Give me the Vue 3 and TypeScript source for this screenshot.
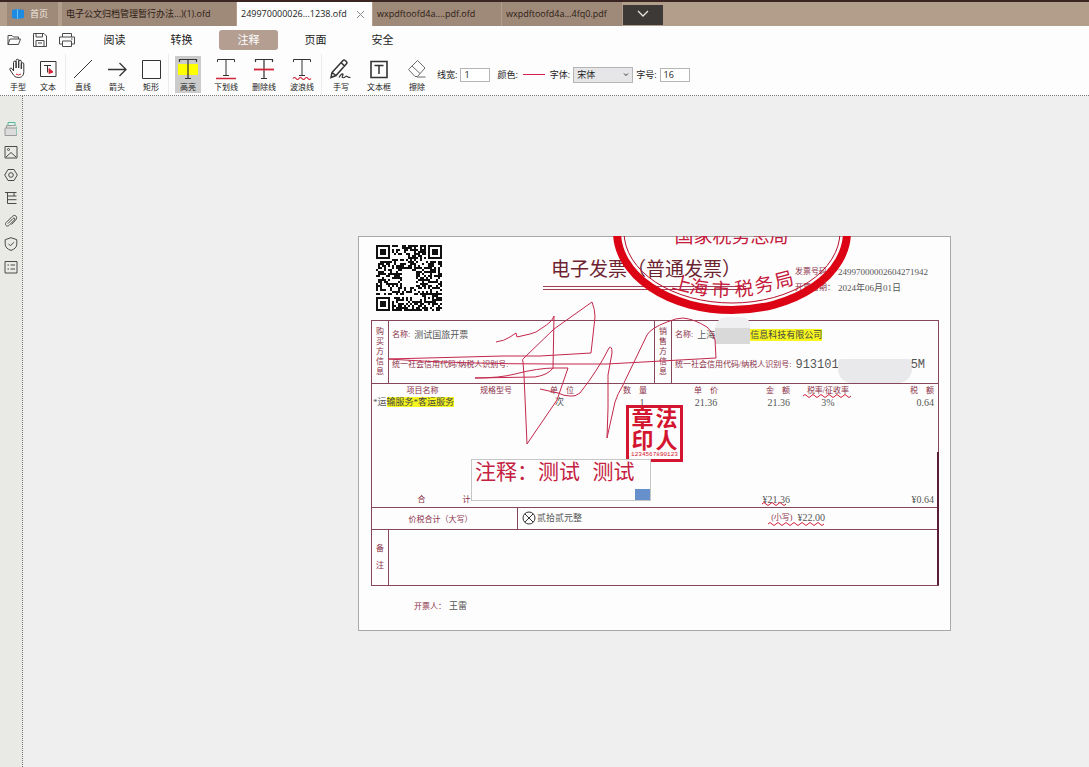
<script setup lang="ts">
import { ref } from 'vue'

interface Tool {
  id: string
  label: string
}

const menus = ['阅读', '转换', '注释', '页面', '安全']
const activeMenu = ref('注释')

const toolGroups: { name: string; tools: Tool[] }[] = [
  { name: 'select', tools: [{ id: 'hand', label: '手型' }, { id: 'text', label: '文本' }] },
  {
    name: 'shape',
    tools: [{ id: 'line', label: '直线' }, { id: 'arrow', label: '箭头' }, { id: 'rect', label: '矩形' }],
  },
  {
    name: 'mark',
    tools: [
      { id: 'highlight', label: '高亮' },
      { id: 'underline', label: '下划线' },
      { id: 'strike', label: '删除线' },
      { id: 'wavy', label: '波浪线' },
    ],
  },
  {
    name: 'mark',
    tools: [{ id: 'pen', label: '手写' }, { id: 'textbox', label: '文本框' }, { id: 'erase', label: '擦除' }],
  },
]
const activeTool = ref('highlight')

const lineWidth = ref('1')
const fontSize = ref('16')
const fontName = ref('宋体')
const note = ref('注释：测试 测试')

const panels = ['缩略图', '图片', '设置', '大纲', '附件', '签章', '列表']

function finder(x: number, y: number, size: number): boolean | null {
  const corners = [[0, 0], [size - 7, 0], [0, size - 7]]
  for (const [cx, cy] of corners) {
    const dx = x - cx
    const dy = y - cy
    if (dx >= -1 && dx <= 7 && dy >= -1 && dy <= 7) {
      const d = Math.max(Math.abs(dx - 3), Math.abs(dy - 3))
      return d === 3 || d <= 1
    }
  }
  const a = Math.max(Math.abs(x - 26), Math.abs(y - 26))
  if (a <= 2) return a !== 1
  return null
}

function qrPath(size: number): string {
  let seed = 20240601
  let d = ''
  for (let y = 0; y < size; y++) {
    for (let x = 0; x < size; x++) {
      seed = (seed * 48271) % 2147483647
      const fixed = finder(x, y, size)
      const hole = x > 12 && x < 20 && y > 12 && y < 21
      const on = fixed === null ? !hole && (seed >> 8) % 100 < 52 : fixed
      if (on) d += `M${x} ${y}h1v1h-1z`
    }
  }
  return d
}
const qr = qrPath(33)

function wave(x: number, y: number, count: number): string {
  return `M${x} ${y}` + 'q2 -3 4 0t4 0'.repeat(count)
}
const waves = [wave(445, 160, 6), wave(404, 268, 3), wave(410, 288, 7)]

const topSeal = [
  { c: '国', x: 326 }, { c: '家', x: 345 }, { c: '税', x: 364 },
  { c: '务', x: 383 }, { c: '总', x: 402 }, { c: '局', x: 421 },
]
const bottomSeal = [
  { c: '上', x: 324, y: 48, r: 14 }, { c: '海', x: 341, y: 52, r: 8 }, { c: '市', x: 363, y: 54, r: 2 },
  { c: '税', x: 386, y: 53, r: -5 }, { c: '务', x: 406, y: 49, r: -10 }, { c: '局', x: 426, y: 44, r: -15 },
]
const nameSeal = ['章', '法', '印', '人']
</script>

<template>
  <div class="app">
    <nav class="tabs" aria-label="文档">
      <button class="tab home">
        <svg width="14" height="12" viewBox="0 0 14 12"><path d="M1 2l5-1v10l-5-1zM7 1l6 1v8l-6 1z" fill="#1c8be0" /><path d="M6.500 1v10" stroke="#6fc0f5" /></svg>
        <span>首页</span>
      </button>
      <button class="tab long">电子公文归档管理暂行办法...)(1).ofd</button>
      <button class="tab current">
        <span>249970000026...1238.ofd</span>
        <svg width="9" height="9" viewBox="0 0 9 9"><path d="M1 1l7 7M8 1l-7 7" stroke="#8a8a8a" /></svg>
      </button>
      <button class="tab third">wxpdftoofd4a....pdf.ofd</button>
      <button class="tab fourth">wxpdftoofd4a...4fq0.pdf</button>
      <button class="more" aria-label="更多标签">
        <svg width="12" height="8" viewBox="0 0 12 8"><path d="M1 1l5 5 5-5" fill="none" stroke="#e8e4e0" stroke-width="1.300" /></svg>
      </button>
    </nav>

    <header class="ribbon">
      <div class="menu-row">
        <div class="quick">
          <button aria-label="打开">
            <svg width="16" height="16" viewBox="0 0 16 16"><path d="M2 12.500V3.500h4l1.500 1.500h5v2M2 12.500l2-5.500h10.500l-2 5.500z" /></svg>
          </button>
          <button aria-label="保存">
            <svg width="16" height="16" viewBox="0 0 16 16"><path d="M1.500 1.500h10.500l2.500 2.500v10.500h-13zM4 1.500v3.500h6.500V1.500M4 14.500V8.500h8v6M6 11h4" /></svg>
          </button>
          <button aria-label="打印">
            <svg width="18" height="16" viewBox="0 0 18 16"><path d="M4.500 5V1.500h9V5M4.500 12H1.500V5h15v7h-3M4.500 9h9v5.500h-9zM13 7h1.500" /></svg>
          </button>
        </div>
        <button
          v-for="m in menus"
          :key="m"
          class="menu"
          :class="{ on: m === activeMenu }"
          @click="activeMenu = m"
        >{{ m }}</button>
      </div>

      <div class="tool-row">
        <div v-for="(g, gi) in toolGroups" :key="gi" class="group" :class="g.name">
          <button
            v-for="t in g.tools"
            :key="t.id"
            class="tool"
            @click="activeTool = t.id"
          >
            <span class="tool-face" :class="{ on: t.id === activeTool }">
              <svg width="24" height="24" viewBox="0 0 24 24">
                <g v-if="t.id === 'hand'">
                  <path d="M7.500 14V5.500a1.300 1.300 0 0 1 2.600 0V11M10.100 11V3.500a1.300 1.300 0 0 1 2.600 0V11M12.700 11V4.500a1.300 1.300 0 0 1 2.600 0V12M15.300 12V7a1.200 1.200 0 0 1 2.500 0v7.500c0 4-2 6-5.300 6-3 0-4.500-1.500-5.700-3.500L4 12.800c-.8-1.600 1-2.300 2-1.200l1.500 2.200" />
                  <path d="M10 17q2.500 2 5 0" stroke="#d22638" />
                </g>
                <g v-else-if="t.id === 'text'">
                  <path d="M4.500 4.500h15.500v15H4.500z" />
                  <path d="M8 8.500h7M11.500 8.500v7" />
                  <path d="M13 11.500l4 3.500-4 1.500z" fill="#d22638" stroke="#d22638" />
                </g>
                <path v-else-if="t.id === 'line'" d="M3 21L21 3" />
                <path v-else-if="t.id === 'arrow'" d="M3 12.500h18M14.500 6L21 12.500l-6.500 6.500" stroke-width="1.300" />
                <path v-else-if="t.id === 'rect'" d="M3.500 3.500h18v18h-18z" />
                <g v-else-if="t.id === 'highlight'">
                  <path d="M2 7h20v11H2z" fill="#ffff00" stroke="none" />
                  <path d="M3.500 5V2.500h17V5M12 2.500v19M9 21.500h6" stroke-width="1.200" />
                </g>
                <g v-else-if="t.id === 'underline'">
                  <path d="M3.500 5V2.500h17V5M12 2.500v15.500M9 18.500h6" />
                  <path d="M2 21.500h20" stroke="#d22638" stroke-width="1.500" />
                </g>
                <g v-else-if="t.id === 'strike'">
                  <path d="M3.500 5V2.500h17V5M12 2.500v19M9 21.500h6" stroke-width="1.200" />
                  <path d="M2 12.500h20" stroke="#d22638" stroke-width="1.800" />
                </g>
                <g v-else-if="t.id === 'wavy'">
                  <path d="M3.500 5V2.500h17V5M12 2.500v15.500M9 18.500h6" />
                  <path d="M3 21.500q1.500-2 3 0t3 0 3 0 3 0 3 0 3 0" stroke="#d22638" stroke-width="1.200" />
                </g>
                <g v-else-if="t.id === 'pen'">
                  <path d="M3 15.500L14 3.500q1-1 2.200 0l1.300 1.200q1 1 0 2L7 18.500l-5 2zM12 5.500l3.500 3.500M3 15.500l4 3" stroke-width="1.500" />
                  <path d="M10 20.500c3-5 5-4 3.500-1.500s2 2 3 .500 1.500 1 5 1" stroke-width="1.200" />
                </g>
                <g v-else-if="t.id === 'textbox'">
                  <path d="M4 4.500h16v16H4z" stroke-width="1.600" />
                  <path d="M7.500 8.500h9M12 8.500v8.500" stroke-width="1.500" />
                </g>
                <g v-else>
                  <path d="M3.500 12.500L12.500 3.500l7.500 7.500-7.500 8.500H10zM7 9l8 7.500M12 20h8.500" stroke="#6c6c6c" />
                </g>
              </svg>
              <span>{{ t.label }}</span>
            </span>
          </button>
        </div>

        <div class="options">
          <label for="line-width">线宽:</label>
          <input id="line-width" v-model="lineWidth" type="text" />
          <span class="gap"></span>
          <span>颜色:</span>
          <button class="color" aria-label="颜色"><i></i></button>
          <label for="font-name">字体:</label>
          <span class="select">
            <select id="font-name" v-model="fontName">
              <option>宋体</option>
              <option>楷体</option>
            </select>
            <svg width="6" height="4" viewBox="0 0 6 4"><path d="M1 .500l2 2 2-2" fill="none" stroke="#333" /></svg>
          </span>
          <label for="font-size">字号:</label>
          <input id="font-size" v-model="fontSize" type="text" />
        </div>
      </div>
    </header>

    <div class="body">
      <aside class="side">
        <button v-for="(p, i) in panels" :key="p" :aria-label="p">
          <svg width="14" height="14" viewBox="0 0 14 14">
            <g v-if="i === 0">
              <path d="M4 4V.500h7V4" fill="#dff3ea" stroke="#55b79a" />
              <path d="M2.500 6V3.500h9M1 6h11.500v7.500H1z" fill="#dcdcdc" stroke="#9a9a9a" />
              <path d="M12.500 4.500v8" stroke="#8fc9b6" />
            </g>
            <g v-else-if="i === 1">
              <path d="M1 1.500h12v11.500H1zM2 12l5-4.500 5 4.500" />
              <circle cx="4.500" cy="4.500" r="1" />
            </g>
            <g v-else-if="i === 2">
              <path d="M4 1.500h6L13.300 7 10 12.500H4L.7 7z" />
              <circle cx="7" cy="7" r="2.300" />
            </g>
            <path v-else-if="i === 3" d="M1 1.500h11.500M3.500 1.500v11h9M3.500 5h9M3.500 8.700h9M10 1.500v3.500" />
            <path v-else-if="i === 4" d="M4 9.500l5-5c1.200-1.200 2.600.2 1.500 1.400l-5.500 5.500c-2 2-4.800-.8-2.800-2.900l6-6c2.800-2.800 6 .6 3.600 3.300L7.500 10.500" />
            <path v-else-if="i === 5" d="M7 .700l5.800 2v4.500c0 3-2.300 5-5.800 6.200C3.500 12.200 1.200 10.200 1.200 7.200V2.700zM4.500 6.800l2 2 3.300-3.500" />
            <path v-else d="M1 1.500h12v11.500H1zM3.500 5h1.500M6.500 5h4.500M3.500 9h1.500M6.500 9h4.500" />
          </svg>
        </button>
      </aside>

      <main class="canvas">
        <article class="paper">
          <div class="head">
            <svg class="qr" width="66" height="66" viewBox="0 0 33 33" shape-rendering="crispEdges"><path :d="qr" fill="#111" /></svg>
            <h1>电子发票（普通发票）</h1>
            <dl class="meta">
              <dt>发票号码：</dt><dd>24997000002604271942</dd>
              <dt>开票日期：</dt><dd>2024年06月01日</dd>
            </dl>
          </div>

          <div class="sheet">
            <section class="parties">
              <div class="vertical">购买方信息</div>
              <div class="party">
                <p><b>名称:</b> 测试国旅开票</p>
                <p><b>统一社会信用代码/纳税人识别号:</b></p>
              </div>
              <div class="vertical">销售方信息</div>
              <div class="party">
                <p><b>名称:</b><span class="row">上海<span class="mask name"></span><mark>信息科技有限公司</mark></span></p>
                <p><b>统一社会信用代码/纳税人识别号:</b><span class="row"><span class="code">913101</span><span class="mask id"></span><span class="code">5M</span></span></p>
              </div>
            </section>

            <table class="items">
              <colgroup>
                <col class="c1" /><col class="c2" /><col class="c3" /><col class="c4" /><col class="c5" /><col class="c6" /><col class="c7" /><col />
              </colgroup>
              <thead>
                <tr>
                  <th>项目名称</th><th>规格型号</th><th>单　位</th><th>数　量</th><th>单　价</th><th class="amount">金　额</th><th>税率/征收率</th><th class="tax">税　额</th>
                </tr>
              </thead>
              <tbody>
                <tr>
                  <td class="item">*运<mark>输服务*客运服务</mark></td><td></td><td class="unit">次</td><td class="qty">1</td><td>21.36</td><td class="amount">21.36</td><td>3%</td><td class="tax">0.64</td>
                </tr>
                <tr class="blank"><td colspan="8"></td></tr>
              </tbody>
              <tfoot>
                <tr>
                  <th class="sum"><span>合</span><span>计</span></th><td colspan="4"></td><td class="amount">¥21.36</td><td></td><td class="tax">¥0.64</td>
                </tr>
              </tfoot>
            </table>

            <section class="total">
              <div class="total-label">价税合计（大写）</div>
              <div class="total-value">
                <svg width="14" height="14" viewBox="0 0 14 14"><circle cx="7" cy="7" r="6" /><path d="M2.800 2.800l8.400 8.400M11.200 2.800l-8.400 8.400" /></svg>
                <span>贰拾贰元整</span>
                <span class="small"><b>(小写)</b><em>¥22.00</em></span>
              </div>
            </section>

            <section class="remark">
              <div class="vertical wide">备注</div>
              <div></div>
            </section>
          </div>

          <p class="issuer"><b>开票人：</b>王雷</p>

          <svg class="ink" viewBox="0 0 593 395">
            <g fill="none">
              <ellipse cx="374" cy="-4" rx="115" ry="78" stroke="#dc0414" stroke-width="8" />
              <ellipse cx="374" cy="-4" rx="108" ry="71" stroke="#b80f2a" stroke-width="1" />
            </g>
            <g class="seal-text">
              <text v-for="s in topSeal" :key="'t' + s.x" :x="s.x" y="7">{{ s.c }}</text>
              <text v-for="s in bottomSeal" :key="'b' + s.x" :x="s.x" :y="s.y" dominant-baseline="central" :transform="`rotate(${s.r} ${s.x} ${s.y})`">{{ s.c }}</text>
            </g>
            <g class="scribble">
              <path d="M138 106Q146 105 152 101L158 97L159 101L172 98Q178 97 184 92Q194 86 196 80L195 132Q190 139 177 141L117 142Q142 142 157 138Q180 132 197 132L210 132L199 164L169 208L166 139L165 126Q163 124 167 121L196 93L234 66Q237 73 237 81L233 117L182 120L145 120L30 123Q100 128 197 128L249 128L358 122L357 104Q356 97 349 91Q336 83 325 82Q318 82 309 86Q293 92 289 99L264 151Q260 157 257 166L249 202L250 172L250 139L254 117Q254 109 251 112Q240 134 222 157Q217 161 212 160Q206 160 200 157L182 153" />
            </g>
            <path v-for="w in waves" :key="w" :d="w" fill="none" stroke="#d0203c" />
            <path d="M580 216v133" stroke="#5b1c35" stroke-width="2" />
          </svg>

          <div class="seal">
            <div class="seal-name"><span v-for="c in nameSeal" :key="c">{{ c }}</span></div>
            <div class="seal-code">1234567890123</div>
          </div>

          <div class="note">
            <textarea v-model="note" aria-label="注释" spellcheck="false"></textarea>
            <i></i>
          </div>
        </article>
      </main>
    </div>
  </div>
</template>

<style>
body {
  margin: 0;
}
</style>

<style scoped>
.app {
  display: flex;
  flex-direction: column;
  min-height: 100vh;
  background: #efefef;
  color: #222;
  font: 9px/12px "Open Sans", "Noto Sans CJK SC", sans-serif;
}
.app *,
.app *::before {
  box-sizing: border-box;
}
button {
  padding: 0;
  border: 0;
  background: none;
  color: inherit;
  font: inherit;
}
p,
h1,
dl,
dd {
  margin: 0;
}

.tabs {
  display: flex;
  height: 26px;
  padding: 0 0 0 7px;
  gap: 1px;
  border-top: 2px solid #3b2523;
  background: #b39e8c;
}
.tab {
  display: flex;
  align-items: center;
  padding-left: 4px;
  background: #9f8979;
  color: #2c1c14;
  white-space: nowrap;
}
.home {
  width: 51px;
  gap: 5px;
  margin-right: 3px;
  color: #f1e9e2;
}
.long {
  width: 174px;
}
.current {
  width: 135px;
  justify-content: space-between;
  padding-right: 7px;
  background: #fdfdfd;
  color: #222;
}
.third {
  width: 128px;
}
.fourth {
  width: 120px;
}
.more {
  width: 40px;
  height: 20px;
  margin-top: 3px;
  background: #3d3936;
}

.ribbon {
  height: 70px;
  border-bottom: 1px dotted #777;
  background: #fdfdfd;
}
.menu-row {
  display: flex;
  align-items: center;
  height: 28px;
  gap: 8px;
}
.quick {
  display: flex;
  align-items: center;
  gap: 10px;
  width: 77px;
  padding-left: 6px;
}
.quick svg,
.side svg {
  display: block;
  fill: none;
  stroke: #4a4a4a;
}
.menu {
  width: 59px;
  height: 20px;
  border-radius: 3px;
  font-size: 11px;
}
.menu.on {
  background: #b39e91;
  color: #fff;
}

.tool-row {
  display: flex;
  height: 41px;
}
.group {
  display: flex;
  align-items: center;
}
.group.select {
  padding: 0 2px 0 3px;
  border-right: 1px solid #ececec;
}
.group.mark {
  border-left: 1px solid #ececec;
}
.tool {
  width: 38px;
}
.select .tool {
  width: 30px;
}
.shape .tool {
  width: 34px;
}
.tool-face {
  display: flex;
  flex-direction: column;
  align-items: center;
  width: 26px;
  height: 37px;
  margin: 0 auto;
  padding-top: 1px;
  font-size: 8px;
  line-height: 12px;
  white-space: nowrap;
}
.tool-face.on {
  background: #cbcbcb;
}
.tool-face svg {
  flex: none;
  fill: none;
  stroke: #333;
}
.options {
  display: flex;
  align-items: center;
  gap: 3px;
  padding-left: 1px;
}
.options input,
.options select {
  width: 30px;
  height: 14px;
  padding: 0 3px;
  border: 1px solid #b5b5b5;
  border-radius: 0;
  background: #fff;
  color: #222;
  font: inherit;
}
.options .gap {
  width: 1px;
}
.color {
  width: 26px;
  height: 14px;
}
.color i {
  display: block;
  height: 1px;
  margin: 0 2px;
  background: #d3204f;
}
.options .select {
  display: flex;
  align-items: center;
}
.options select {
  width: 60px;
  height: 16px;
  background: #e6e6e8;
  appearance: none;
}
.options .select svg {
  margin-left: -10px;
  margin-right: 4px;
}

.body {
  display: flex;
  flex: 1;
}
.side {
  display: flex;
  flex-direction: column;
  width: 23px;
  padding-top: 21px;
  border-right: 1px dotted #777;
  background: #e9e9e5;
}
.side button {
  height: 23px;
  padding-left: 4px;
}
.canvas {
  display: flex;
  flex: 1;
  align-items: center;
  justify-content: center;
  padding: 3px 0 0 197px;
}

.paper {
  position: relative;
  flex: none;
  width: 593px;
  height: 395px;
  padding: 9px 12px 0 13px;
  overflow: hidden;
  background: #fdfdfd;
  box-shadow: inset 0 0 0 1px #a9a9a9;
  color: #555;
  font-family: "Liberation Serif", "Noto Sans CJK SC", serif;
}
.paper b,
.paper th,
.paper dt,
.vertical,
.total-label {
  color: #8a3048;
  font-size: 8px;
  font-weight: 400;
}
.paper mark {
  background: #f6f61e;
  color: #444;
}
.head {
  display: flex;
  align-items: flex-start;
  height: 75px;
  padding-left: 5px;
}
.head h1 {
  width: 203px;
  height: 45px;
  margin-left: 101px;
  padding: 13px 0 0 8px;
  border-bottom: 4px double #a04058;
  color: #6c2330;
  font-size: 19px;
  font-weight: 400;
  line-height: 24px;
  white-space: nowrap;
}
.meta {
  display: grid;
  grid-template-columns: 43px auto;
  margin: 19px 0 0 49px;
  line-height: 16px;
  white-space: nowrap;
}

.sheet {
  border: 1px solid #86475a;
}
.parties {
  display: grid;
  grid-template-columns: 17px 1fr 17px 1fr;
  height: 62px;
}
.vertical {
  display: flex;
  align-items: center;
  justify-content: center;
  padding: 0 4px;
  border-right: 1px solid #86475a;
  line-height: 10px;
  word-break: break-all;
}
.party {
  display: flex;
  flex-direction: column;
  gap: 18px;
  padding: 8px 0 0 3px;
  border-right: 1px solid #86475a;
  white-space: nowrap;
}
.party:last-child {
  border-right: 0;
}
.party p,
.row {
  display: flex;
  align-items: center;
  height: 12px;
}
.party p {
  gap: 4px;
}
.mask {
  flex: none;
  background: #e9e8ea;
}
.mask.name {
  width: 35px;
  height: 27px;
  margin-top: -8px;
  border-radius: 12px 8px 0 0;
  background: linear-gradient(#efeef0 40%, #d9d9da 40%);
}
.mask.id {
  width: 74px;
  height: 24px;
  margin: 12px -1px 0 -1px;
  border-radius: 4px 4px 14px 14px;
}
.code {
  font: 12px/12px "Liberation Mono", monospace;
}

.items {
  width: 100%;
  height: 124px;
  border-top: 1px solid #86475a;
  border-collapse: separate;
  border-spacing: 0;
  table-layout: fixed;
}
.items th,
.items td {
  height: 11px;
  padding: 0;
  text-align: center;
  line-height: 11px;
  white-space: nowrap;
}
.items thead th {
  height: 13px;
}
.items td {
  font-size: 10px;
}
.items td.item {
  padding-left: 1px;
  font-size: 9px;
  text-align: left;
}
.items td.unit {
  padding-right: 5px;
  font-size: 9px;
}
.items td.qty {
  padding-left: 14px;
}
.items .amount {
  padding-right: 13px;
  text-align: right;
}
.items .tax {
  padding-right: 4px;
  text-align: right;
}
.items .blank td {
  height: auto;
}
.items tfoot th,
.items tfoot td {
  height: 14px;
}
.sum span + span {
  margin-left: 37px;
}
.items .sum {
  padding-left: 43px;
}
.c1 { width: 101px; }
.c2 { width: 46px; }
.c3 { width: 86px; }
.c4 { width: 60px; }
.c5 { width: 82px; }
.c6 { width: 56px; }
.c7 { width: 50px; }

.total {
  display: grid;
  grid-template-columns: 146px 1fr;
  height: 22px;
  border-top: 1px solid #86475a;
}
.total-label {
  display: flex;
  align-items: center;
  justify-content: center;
  padding: 3px 8px 0 0;
  border-right: 1px solid #86475a;
}
.total-value {
  display: flex;
  align-items: center;
  gap: 1px;
  padding: 0 113px 0 4px;
}
.total-value svg {
  fill: none;
  stroke: #333;
}
.small {
  display: flex;
  gap: 5px;
  margin-left: auto;
}
.small em {
  font-size: 10px;
  font-style: normal;
}
.remark {
  display: grid;
  grid-template-columns: 17px 1fr;
  height: 56px;
  border-top: 1px solid #86475a;
}
.vertical.wide {
  line-height: 17px;
}
.issuer {
  padding: 14px 0 0 43px;
}
.issuer b {
  margin-right: 3px;
}

.ink {
  position: absolute;
  inset: 0;
  pointer-events: none;
}
.seal-text {
  fill: #c41a3c;
  font-size: 19px;
  text-anchor: middle;
}
.scribble {
  fill: none;
  stroke: #c2284c;
}
.seal {
  position: absolute;
  top: 169px;
  left: 268px;
  width: 57px;
  height: 57px;
  border: 3px solid #d4152f;
  color: #d4152f;
}
.seal-name {
  display: grid;
  grid-template-columns: 24px 24px;
  justify-content: center;
  font-size: 22px;
  font-weight: 700;
  line-height: 22px;
  text-align: center;
}
.seal-code {
  font: 6px/6px "Liberation Mono", monospace;
  text-align: center;
}
.note {
  position: absolute;
  top: 223px;
  left: 113px;
  width: 180px;
  height: 42px;
  border: 1px solid #c6c6c6;
  background: #fdfdfd;
}
.note textarea {
  display: block;
  width: 100%;
  height: 100%;
  padding: 0 0 0 3px;
  border: 0;
  background: none;
  color: #c4203f;
  font: 21px/27px "Liberation Mono", "Noto Sans CJK SC", monospace;
  resize: none;
  overflow: hidden;
}
.note i {
  position: absolute;
  right: 0;
  bottom: 0;
  width: 15px;
  height: 11px;
  background: #6690cc;
}
</style>
